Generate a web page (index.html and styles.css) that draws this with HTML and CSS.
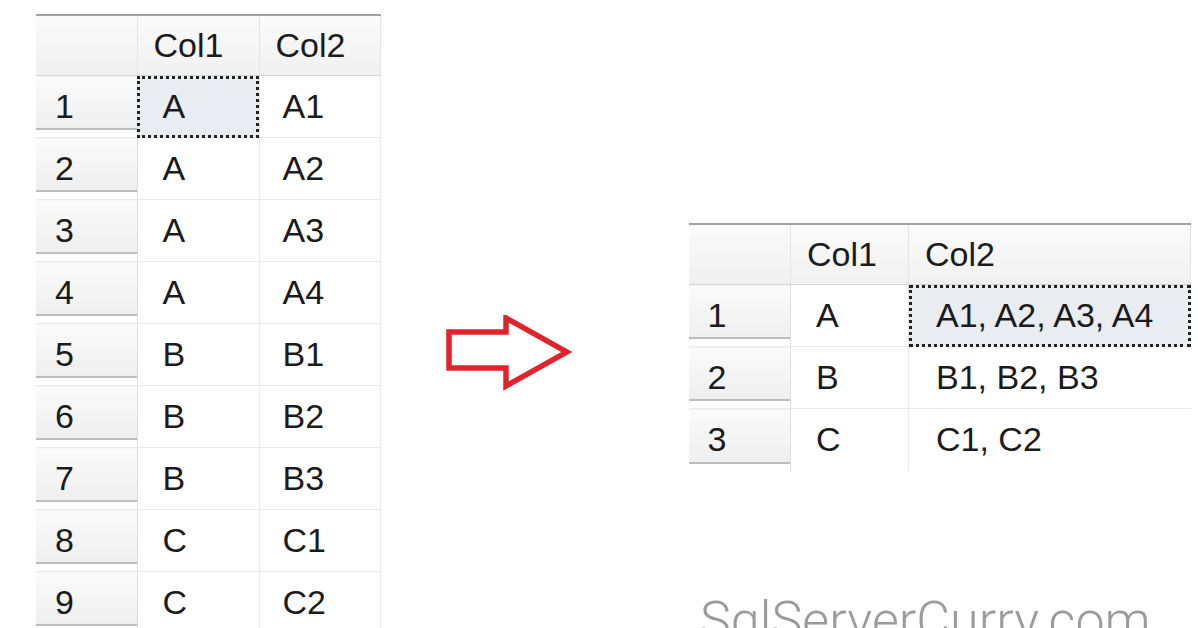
FILE: index.html
```html
<!DOCTYPE html>
<html lang="en">

<head>
    <meta charset="UTF-8">
    <title>Concatenate rows - SqlServerCurry</title>
    <link rel="stylesheet" href="styles.css">
</head>

<body>
    <main class="page">
        <table class="grid grid-before">
            <colgroup>
                <col class="col-num">
                <col class="col-one">
                <col class="col-two">
            </colgroup>
            <thead>
                <tr>
                    <th></th>
                    <th>Col1</th>
                    <th>Col2</th>
                </tr>
            </thead>
            <tbody>
                <tr><td class="rownum">1</td><td class="selected">A</td><td>A1</td></tr>
                <tr><td class="rownum">2</td><td>A</td><td>A2</td></tr>
                <tr><td class="rownum">3</td><td>A</td><td>A3</td></tr>
                <tr><td class="rownum">4</td><td>A</td><td>A4</td></tr>
                <tr><td class="rownum">5</td><td>B</td><td>B1</td></tr>
                <tr><td class="rownum">6</td><td>B</td><td>B2</td></tr>
                <tr><td class="rownum">7</td><td>B</td><td>B3</td></tr>
                <tr><td class="rownum">8</td><td>C</td><td>C1</td></tr>
                <tr><td class="rownum">9</td><td>C</td><td>C2</td></tr>
            </tbody>
        </table>

        <svg class="arrow" width="126" height="76" viewBox="0 0 126 76">
            <path d="M3 17 H60 V3 L121 37 L60 71 V53 H3 Z" fill="none" stroke="#e0232c" stroke-width="5.5" stroke-linejoin="miter"/>
        </svg>

        <table class="grid grid-after">
            <colgroup>
                <col class="col-num">
                <col class="col-one">
                <col class="col-two">
            </colgroup>
            <thead>
                <tr>
                    <th></th>
                    <th>Col1</th>
                    <th>Col2</th>
                </tr>
            </thead>
            <tbody>
                <tr><td class="rownum">1</td><td>A</td><td class="selected">A1, A2, A3, A4</td></tr>
                <tr><td class="rownum">2</td><td>B</td><td>B1, B2, B3</td></tr>
                <tr><td class="rownum">3</td><td>C</td><td>C1, C2</td></tr>
            </tbody>
        </table>
    </main>
    <div class="watermark">SqlServerCurry.com</div>
</body>

</html>
```

FILE: styles.css
```css
body {
    margin: 0;
    background-color: #ffffff;
    font-family: "Liberation Sans", Arial, sans-serif;
    color: #1b1b1b;
    overflow: hidden;
    height: 628px;
    position: relative;
}

.page {
    display: flex;
    align-items: flex-start;
    padding: 14px 0 0 36px;
}

.grid {
    flex: none;
    border-collapse: collapse;
    border-top: 2px solid #a3a3a3;
    font-size: 34px;
    table-layout: fixed;
}

.grid th {
    height: 59px;
    padding: 0 0 0 16px;
    text-align: left;
    font-weight: normal;
    background: linear-gradient(#fbfbfb, #f0f0f0);
    border-right: 1px solid #e4e4e4;
    border-bottom: 1px solid #d6d6d6;
    white-space: nowrap;
}

.grid td {
    height: 62px;
    padding: 0 0 0 25px;
    border-right: 1px solid #e9e9e9;
    border-bottom: 1px solid #e9e9e9;
    box-sizing: border-box;
    white-space: nowrap;
}

.grid .rownum {
    padding-left: 19px;
    background: linear-gradient(#fbfbfb, #ececec);
    border-right: 1px solid #dedede;
    box-shadow: inset 0 -7px 0 #ffffff, inset 0 -9px 0 #bdbdbd;
}

.grid .selected {
    background-color: #e9ecf0;
    outline: 3px dotted #222222;
    outline-offset: -3px;
}

.grid-before {
    width: 344px;
}

.grid-before .col-num {
    width: 101px;
}

.grid-before .col-one {
    width: 122px;
}

.grid-before .col-two {
    width: 121px;
}

.grid-before td:nth-child(3) {
    padding-left: 23px;
}

.arrow {
    flex: none;
    margin: 301px 0 0 65px;
}

.grid-after {
    width: 502px;
    margin: 209px 0 0 117px;
}

.grid-after .col-num {
    width: 102px;
}

.grid-after .col-one {
    width: 118px;
}

.grid-after .col-two {
    width: 282px;
}

.grid-after td:nth-child(3) {
    padding-left: 27px;
    border-right: none;
}

.grid-after tr:last-child td {
    border-bottom: none;
}

.watermark {
    position: absolute;
    left: 700px;
    top: 590px;
    font-family: Roboto, "Liberation Sans", sans-serif;
    font-weight: 300;
    font-size: 52px;
    color: #9b9b9b;
    white-space: nowrap;
}
```
